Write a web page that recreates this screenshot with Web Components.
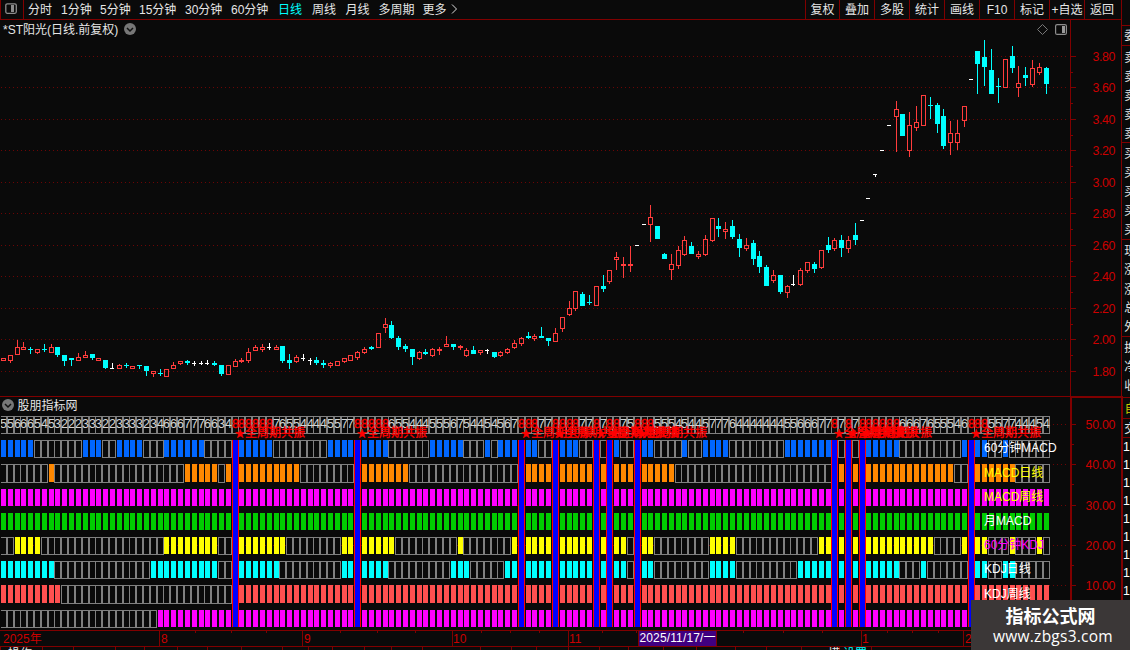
<!DOCTYPE html>
<html lang="zh-CN">
<head>
<meta charset="utf-8">
<title>*ST阳光 日线</title>
<style>
html,body{margin:0;height:100%;background:#0a0a0a;overflow:hidden}
body{font:12px/14px "Liberation Sans","Noto Sans CJK SC",sans-serif;color:#e6e6e6;
  --bg:#0a0a0a;--line:#800000;--scale:#c00000}
</style>
</head>
<body>
<stock-app></stock-app>
<script>
const BG='#0a0a0a', LINE='#800000', SCALE='#cc0000', GREY='#808080';
const COUNT=154;
const colX=i=>Math.round(0.91+i*6.815);
const rect=(x,y,w,h,f)=>`<rect x="${x}" y="${y}" width="${w}" height="${h}" fill="${f}"/>`;
const frame=(x,y,w,h,s,f='none')=>`<rect x="${x+.5}" y="${y+.5}" width="${w-1}" height="${h-1}" fill="${f}" stroke="${s}"/>`;
const label=(x,y,t,f,extra='')=>`<text x="${x}" y="${y}" fill="${f}" ${extra}>${t}</text>`;
const dots=y=>`<path d="M1 ${y+.5}H1069" stroke="#6c0505" stroke-dasharray="1 3"/>`;

class Base extends HTMLElement{
  constructor(){super();this.attachShadow({mode:'open'});}
  connectedCallback(){this.shadowRoot.innerHTML=`<style>${this.css()}</style>${this.html()}`;}
  css(){return ':host{display:block}';}
  html(){return '<slot></slot>';}
}

customElements.define('tool-item',class extends Base{
  css(){return `:host{display:block;box-sizing:border-box;white-space:nowrap;line-height:19px;padding-top:.5px;height:19px;flex:none}
    :host([active]){color:#00ffff}
    :host([boxed]){border-left:1px solid var(--line);width:35px;text-align:center}`;}
});

customElements.define('period-bar',class extends Base{
  css(){return `:host{display:flex;height:19px;border-bottom:1px solid var(--line);background:var(--bg)}
    .side{width:22px;border-left:1px solid var(--line);border-right:1px solid var(--line);flex:none}
    nav{display:flex;flex:1;padding-left:4px}
    .tools{display:flex;flex:none;width:316px}
    svg{display:block}`;}
  html(){
    const p=[['分时',33],['1分钟',39],['5分钟',39],['15分钟',46],['30分钟',46],['60分钟',47],['日线',34],['周线',33.5],['月线',33],['多周期',44],['更多',28]];
    const t=['复权','叠加','多股','统计','画线','F10','标记','+自选','返回'];
    return `<div class="side"><svg width="22" height="19"><rect x="4.8" y="3.8" width="10.5" height="9.5" rx="1.5" fill="none" stroke="#8c8c8c" stroke-width="1.3"/><rect x="10" y="5" width="3" height="7" fill="#8c8c8c"/></svg></div>
    <nav>${p.map(([n,w])=>`<tool-item style="width:${w}px"${n==='日线'?' active':''}>${n}</tool-item>`).join('')}<svg width="8" height="19"><path d="M1 4.5L5.5 9L1 13.5" fill="none" stroke="#ddd"/></svg></nav>
    <div class="tools">${t.map((n,i)=>`<tool-item boxed${i?'':' style="width:34px"'}>${n}</tool-item>`).join('')}</div>`;
  }
});

/* each candle: colour letter, high, body top, body bottom, low */
const CANDLES=`R358 358 361 361|R355 355 361 363|R340 347 355 355|R342 347 350 350|C347 349 350 354|R349 349 353 354|C344 349 350 352|R344 347 353 353|C347 347 355 357|C355 355 361 366|C358 358 360 366|R353 357 361 361|R351 355 358 358|C354 354 358 360|R358 358 361 361|C360 360 368 369|W363 368 369 369|R364 365 369 369|C363 365 366 368|R366 366 369 369|C365 365 366 369|C366 366 371 376|R371 371 374 377|C369 373 374 376|R369 369 377 377|R362 365 369 369|R361 361 364 365|C360 361 363 365|W361 363 364 366|W361 363 364 365|W360 363 364 365|C361 363 365 366|C365 365 374 376|R365 365 375 375|R359 361 367 367|R358 360 362 363|R348 352 361 363|R345 347 351 351|R344 347 350 352|W343 347 348 350|R345 347 350 350|C346 346 361 363|C354 360 363 369|R355 357 362 363|W354 358 359 361|W358 360 361 365|C357 360 363 365|C360 363 365 368|R362 363 366 368|R361 361 366 366|R358 358 362 363|R355 355 361 361|R351 352 358 360|R347 349 353 354|C346 347 349 350|R333 333 348 348|R318 324 328 333|C321 325 338 339|C336 338 347 350|C344 346 349 352|C349 349 357 365|R351 352 359 360|C349 352 354 355|R348 349 356 357|R347 349 351 355|R336 344 347 347|C344 344 347 350|R345 346 348 350|R348 350 356 357|C346 350 354 354|R350 350 353 355|W349 350 351 354|C352 352 357 358|R351 352 356 357|R348 349 353 354|R340 343 348 349|R337 338 344 346|C332 336 338 339|R334 336 339 341|C327 336 338 338|C338 338 341 346|R328 333 342 342|R317 317 329 332|R301 308 315 316|R291 291 309 311|C292 294 306 306|C295 302 303 305|R286 286 306 306|C275 286 289 292|R270 270 282 284|R252 257 260 270|R257 264 266 278|R246 264 266 272|W245 245 246 246|W224 224 225 225|R205 217 225 242|C226 226 239 239|C253 254 259 259|R254 264 270 280|R246 250 266 269|R236 240 255 256|C242 246 254 254|R251 254 257 259|R235 239 255 256|R218 218 241 242|C218 226 229 237|R222 229 232 239|C220 226 237 239|C234 239 248 257|R238 245 249 251|C240 243 259 265|C251 256 267 273|C265 267 286 286|R270 275 281 283|C275 275 292 294|R285 286 293 298|W275 284 285 286|R268 270 285 286|R262 262 271 273|C262 264 269 273|R250 250 268 269|C237 245 250 253|R238 240 249 251|C235 240 248 257|R236 240 249 253|C223 235 240 245|W220 220 221 221|W198 198 199 199|W174 174 175 177|W150 150 151 151|W125 125 126 126|R101 109 117 152|C114 114 136 136|R112 125 151 157|R106 122 128 131|R95 95 126 126|C97 105 106 119|C103 105 124 133|C109 116 146 149|R121 133 143 155|R120 133 143 150|R106 106 121 127|W79 79 80 80|C51 51 64 94|C40 57 67 86|C49 70 94 94|C78 86 87 103|R59 59 88 88|C46 56 68 73|R66 83 88 97|C67 75 78 86|R60 68 85 87|R63 67 73 75|C67 68 84 94`
  .split('|').map(s=>[s[0],...s.slice(1).split(' ').map(Number)]);

customElements.define('kline-panel',class extends Base{
  css(){return `:host{display:block;height:376px}
    svg{display:block;font:12px "Liberation Sans","Noto Sans CJK SC",sans-serif}`;}
  html(){
    let g='';
    const ys=[56,87,119,150,182,213,245,276,308,339,371];
    ys.forEach((y,i)=>{
      g+=dots(y)+rect(1071,y,5,1,LINE);
      if(i<10)g+=rect(1071,y+16,2,1,LINE);
      g+=label(1092.5,y+5,(3.8-i*.2).toFixed(2),SCALE,'textLength="23" style="font-size:12.4px"');
    });
    g+=rect(1070,20,1,376,LINE);
    const col={R:'#ff3c3c',C:'#00ffff',W:'#ffffff'};
    CANDLES.forEach(([k,h,t,b,l],i)=>{
      const x=colX(i),c=col[k];
      if(t>h)g+=rect(x+2,h,1,t-h,c);
      if(l>b)g+=rect(x+2,b,1,l-b,c);
      if(k==='R'&&b-t>2)g+=frame(x,t,5,b-t,c);
      else g+=rect(x,t,k==='W'?4:5,b-t,c);
    });
    return `<svg width="1121" height="376" viewBox="0 20 1121 376" shape-rendering="crispEdges">${g}
      ${label(3,34,'*ST阳光(日线.前复权)','#e6e6e6')}
      <g shape-rendering="auto"><circle cx="130" cy="29" r="6" fill="#777"/><path d="M127 28L130 31L133 28" fill="none" stroke="#111" stroke-width="1.5"/>
      <path d="M1042.5 24.5L1047.5 29.5L1042.5 34.5L1037.5 29.5Z" fill="none" stroke="#777"/>
      <rect x="1055.6" y="24.6" width="10.8" height="9.8" rx="1.5" fill="none" stroke="#8c8c8c" stroke-width="1.2"/><rect x="1062" y="26" width="3" height="7" fill="#999"/></g></svg>`;
  }
});

const RESONANCE=[34,52,76,81,87,89,93,122,124,126,142];
/* row: top, bottom, colour, ranges of columns that are lit */
const ROWS=[
 [440,457,'#0066ff','0-4 12-14 17-20 24-29 35-39 48-51 53-56 63-67 71 73-75 77-78 82-84 90 94-95 100 103-106 115-121 127-131 141 143-144 147'],
 [464,482,'#ff8800','7 27-31 33 35-43 53-59 77-80 82-86 88 90-92 94-98 123 125 127-139 143-148'],
 [489,506,'#ff00ff','0-153'],
 [513,530,'#00cc00','0-153'],
 [537,554,'#ffff00','2-5 24-31 35-41 50-51 53-57 67 75 77-80 82-86 88 90-91 94-95 104-107 120-121 123 125 127-136 141 143-144 148 152'],
 [561,578,'#00ffff','0-7 22-31 35-40 50-51 53-56 66-68 74-75 77-80 82-86 88 90-91 94-95 104-107 117-121 123 125 127-131 135 143-144 147-148'],
 [585,603,'#ff5050','0-8 34-153'],
 [610,627,'#ff00ff','23-153']
].map(([t,b,c,r])=>{
  const on=new Set(RESONANCE);
  r.split(' ').forEach(s=>{const [a,z=a]=s.split('-').map(Number);for(let i=a;i<=z;i++)on.add(i);});
  return {t,b,c,on};
});

customElements.define('resonance-panel',class extends Base{
  css(){return `:host{display:block;height:234px}
    svg{display:block;font:12px "Liberation Sans","Noto Sans CJK SC",sans-serif}
    .n{font-size:12.5px}
    .hot{stroke:#ff0000;stroke-width:.35px}`;}
  html(){
    let g='';
    [424,464,505,545,585].forEach((y,i)=>{
      g+=dots(y)+rect(1072,y,4,1,LINE)+rect(1072,y+20,2,1,LINE)+label(1085.5,y+5,(50-i*10)+'.00',SCALE,'textLength="30" style="font-size:12.4px"');
    });
    let nums='';
    for(let i=0;i<COUNT;i++){
      const x=colX(i),n=ROWS.filter(r=>r.on.has(i)).length;
      g+=frame(x-1,416,7,18,GREY,BG);
      nums+=label(x-.9,428,n,n===8?'#ff0000':'#d4d4d4',`class="n${n===8?' hot':''}"`);
    }
    for(const r of ROWS){
      for(let i=0;i<COUNT;i++)if(!r.on.has(i))g+=frame(colX(i)-1,r.t,7,r.b-r.t+1,GREY,BG);
      for(let i=0;i<COUNT;i++)if(r.on.has(i))g+=rect(colX(i),r.t,5,r.b-r.t,r.c);
    }
    for(const i of RESONANCE){const x=colX(i);g+=rect(x-1,440,7,187,'#ff0000')+rect(x,440,5,187,'#0000ff');}
    g+=nums;
    for(const i of RESONANCE)g+=label(colX(i)+2,437,'<tspan font-size="10">★</tspan>全周期共振','#ff0000','class="hot"');
    [['60分钟MACD',452,'#fff'],['MACD日线',477,'#ff0'],['MACD周线',501,'#ff0'],['月MACD',525,'#fff'],['60分钟KDJ',549,'#f0f'],['KDJ日线',573,'#fff'],['KDJ周线',598,'#fff']]
      .forEach(([t,y,c])=>g+=label(984,y,t,c));
    g+=rect(0,416,1,214,BG)+rect(0,396,1121,1,LINE)+rect(1070,396,2,234,LINE)+rect(1070,396,51,2,LINE);
    return `<svg width="1121" height="234" viewBox="0 396 1121 234" shape-rendering="crispEdges">${g}
      <g shape-rendering="auto"><circle cx="8" cy="405" r="6" fill="#777"/><path d="M5 404L8 407L11 404" fill="none" stroke="#111" stroke-width="1.5"/></g>
      ${label(17.5,410,'股朋指标网','#e6e6e6')}</svg>`;
  }
});

customElements.define('time-axis',class extends Base{
  css(){return `:host{display:block;height:20px}
    svg{display:block;font:12px "Liberation Sans","Noto Sans CJK SC",sans-serif}`;}
  html(){
    let g=rect(0,630,1121,1,LINE)+rect(0,646,1121,1,LINE);
    [159,302,452,568,716,861,963].forEach(x=>g+=rect(x,631,1,15,LINE));
    [195,231,266,340,377,415,481,510,539,602,636,743,783,822,887,912,938].forEach(x=>g+=rect(x,631,1,2,LINE));
    [0,42,73,115,144,177,207,241,282,308,332,364,391,422,480,511,536,568,599,628,663,696,735,766,801,839,871].forEach(x=>g+=rect(x,647,1,3,LINE));
    [[3,'2025年'],[161,'8'],[304,'9'],[453,'10'],[569,'11'],[862,'1'],[965,'2']].forEach(([x,t])=>g+=label(x,643,t,SCALE));
    g+=rect(638,631,1,15,LINE)+rect(639,631,77,15,'#400080')+label(639.5,642,'2025/11/17/一','#fff','textLength="76"');
    g+=label(8,658,'操作','#e6e6e6')+label(828,658,'模','#e6e6e6')+label(843,658,'设置','#00ffff');
    return `<svg width="1121" height="20" viewBox="0 630 1121 20" shape-rendering="crispEdges">${g}</svg>`;
  }
});

customElements.define('quote-strip',class extends Base{
  css(){return `:host{display:block;width:9px;overflow:hidden;flex:none}
    svg{display:block;font:12px "Liberation Sans","Noto Sans CJK SC",sans-serif}`;}
  html(){
    let g=rect(0,0,1,396,LINE)+rect(0,396,2,234,LINE);
    [25,45,142,239,336,397,418,437].forEach(y=>g+=rect(0,y,9,1,LINE));
    [['委',35],['卖',57],['卖',76],['卖',95],['卖',114],['卖',133],['买',153],['买',172],['买',191],['买',210],['买',229],['现',250],['涨',269],['涨',289],['总',307],['外',326],['换',347],['净',366],['收',385],['交',428]]
      .forEach(([t,y])=>g+=label(3.2,y+4.5,t,'#e6e6e6'));
    g+=label(3.5,412.5,'自','#cccc00');
    for(let i=0;i<9;i++)g+=label(2,451+i*18,'1','#fff','style="font-size:12.5px"');
    return `<svg width="9" height="650" shape-rendering="crispEdges">${g}</svg>`;
  }
});

customElements.define('site-mark',class extends Base{
  css(){return `:host{position:absolute;right:0;bottom:0;width:159px;height:50px;background:#3b3737;color:#fff;
      display:flex;flex-direction:column;align-items:center;white-space:nowrap}
    b{font:bold 18px/20px "Noto Sans CJK SC",sans-serif;margin-top:5px}
    span{font:15.5px/20px "Open Sans",sans-serif;letter-spacing:.25px;margin-top:1px;padding-left:5px}`;}
  html(){return '<b>指标公式网</b><span>www.zbgs3.com</span>';}
});

customElements.define('stock-app',class extends Base{
  css(){return `:host{display:flex;position:relative;width:1130px;height:650px;background:var(--bg);overflow:hidden}
    main{width:1121px;display:flex;flex-direction:column;flex:none}`;}
  html(){return `<main><period-bar></period-bar><kline-panel></kline-panel><resonance-panel></resonance-panel><time-axis></time-axis></main><quote-strip></quote-strip><site-mark></site-mark>`;}
});
</script>
</body>
</html>
